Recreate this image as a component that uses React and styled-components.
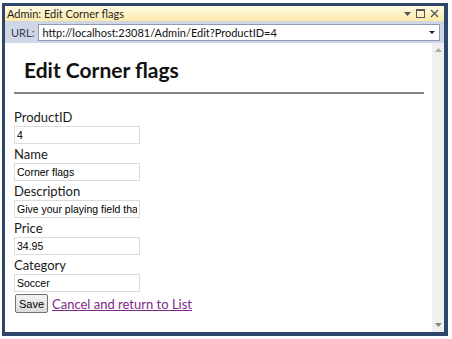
import React from 'react';
import styled, { createGlobalStyle } from 'styled-components';

const Global = createGlobalStyle`
	html, body {
		margin: 0;
		padding: 0;
		background: #fff;
	}
	body {
		width: 452px;
		height: 339px;
		overflow: hidden;
	}
`;

const Window = styled.div`
	margin: 3px 0 0 2px;
	width: 446px;
	height: 333px;
	box-sizing: border-box;
	border-style: solid;
	border-color: #2e4669;
	border-width: 3px 4px 4px 3px;
	display: flex;
	flex-direction: column;
	background: #fff;
	font-family: "Lato", "Open Sans", sans-serif;
`;

const TitleBar = styled.div`
	height: 15px;
	display: flex;
	align-items: center;
	padding: 0 5px 0 2px;
	background: linear-gradient(#fffbe6, #fde9a9);
	font-size: 11px;
	color: #1e1e1e;
`;

const Title = styled.div`
	flex: 1;
`;

const WinButtons = styled.div`
	display: flex;
	gap: 5px;
	align-items: center;
`;

const UrlBar = styled.div`
	height: 22px;
	display: flex;
	align-items: center;
	gap: 4px;
	padding: 0 4px 0 6px;
	background: #cfd7e6;
	font-size: 11px;
	color: #3a3a4a;
`;

const UrlBox = styled.div`
	flex: 1;
	height: 15px;
	display: flex;
	align-items: center;
	justify-content: space-between;
	padding: 0 4px 0 3px;
	background: #fff;
	border: 1px solid #8e9bb3;
	color: #111;
	font-size: 11px;
`;

const Body = styled.div`
	flex: 1;
	display: flex;
	min-height: 0;
`;

const Page = styled.div`
	flex: 1;
	padding: 0 8px 0 9px;
	color: #1a1a1a;
	font-size: 13px;
`;

const Heading = styled.h1`
	margin: 0;
	padding: 14px 0 0 10px;
	height: 32px;
	font-size: 21px;
	font-weight: 700;
	color: #111;
`;

const Rule = styled.hr`
	margin: 3px 0 0 0;
	border: 0;
	height: 2px;
	background: #858585;
`;

const Form = styled.form`
	margin-top: 15px;
	display: flex;
	flex-direction: column;
`;

const Label = styled.label`
	display: block;
	height: 17px;
	line-height: 17px;
	font-size: 13px;
`;

const Input = styled.input`
	width: 126px;
	height: 18px;
	box-sizing: border-box;
	margin: 0 0 2px 0;
	padding: 0 2px;
	border: 1px solid #dcdcdc;
	font-family: "Liberation Sans", Arial, sans-serif;
	font-size: 10.5px;
	color: #000;
	outline: none;
`;

const Actions = styled.div`
	display: flex;
	align-items: center;
	gap: 4px;
	margin-top: 0;
`;

const Button = styled.button`
	width: 33px;
	height: 19px;
	margin-left: 1px;
	padding: 0;
	border: 1px solid #707070;
	border-radius: 2px;
	background: linear-gradient(#f2f2f2, #dcdcdc);
	font-family: "Liberation Sans", Arial, sans-serif;
	font-size: 11px;
	color: #000;
`;

const Link = styled.a`
	color: #7d2a86;
	font-size: 13px;
	text-decoration: underline;
`;

const Scrollbar = styled.div`
	width: 12px;
	background: #f0f0f0;
	display: flex;
	flex-direction: column;
	justify-content: space-between;
	align-items: center;
	padding: 5px 0;
`;

const fields = [
	['ProductID', '4'],
	['Name', 'Corner flags'],
	['Description', 'Give your playing field that professional touch'],
	['Price', '34.95'],
	['Category', 'Soccer'],
];

export default function App() {
	return (
		<>
			<Global />
			<Window>
				<TitleBar>
					<Title>Admin: Edit Corner flags</Title>
					<WinButtons>
						<svg width="7" height="4" viewBox="0 0 7 4"><path d="M0 0h7L3.5 4z" fill="#555" /></svg>
						<svg width="9" height="9" viewBox="0 0 9 9"><rect x="0.5" y="0.5" width="8" height="8" fill="none" stroke="#555" /><rect x="0" y="0" width="9" height="2" fill="#555" /></svg>
						<svg width="9" height="9" viewBox="0 0 9 9"><path d="M1 1l7 7M8 1L1 8" stroke="#555" strokeWidth="1.3" /></svg>
					</WinButtons>
				</TitleBar>
				<UrlBar>
					<span>URL:</span>
					<UrlBox>
						<span>http://localhost:23081/Admin/Edit?ProductID=4</span>
						<svg width="6" height="3" viewBox="0 0 6 3"><path d="M0 0h6L3 3z" fill="#222" /></svg>
					</UrlBox>
				</UrlBar>
				<Body>
					<Page>
						<Heading>Edit Corner flags</Heading>
						<Rule />
						<Form>
							{fields.map(([label, value]) => (
								<div key={label}>
									<Label>{label}</Label>
									<Input defaultValue={value} />
								</div>
							))}
							<Actions>
								<Button type="button">Save</Button>
								<Link href="#">Cancel and return to List</Link>
							</Actions>
						</Form>
					</Page>
					<Scrollbar>
						<svg width="7" height="4" viewBox="0 0 7 4"><path d="M0 4h7L3.5 0z" fill="#aaa" /></svg>
						<svg width="7" height="4" viewBox="0 0 7 4"><path d="M0 0h7L3.5 4z" fill="#888" /></svg>
					</Scrollbar>
				</Body>
			</Window>
		</>
	);
}
